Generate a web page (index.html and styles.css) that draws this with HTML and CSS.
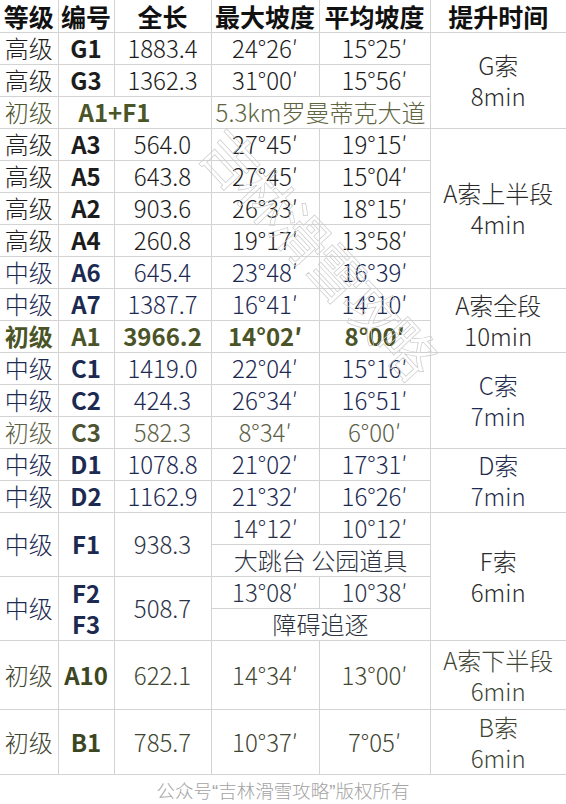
FILE: index.html
```html
<!DOCTYPE html>
<html lang="zh-CN">
<head>
<meta charset="utf-8">
<title>吉林滑雪 雪道数据</title>
<link rel="stylesheet" href="styles.css">
</head>
<body>
<div class="page">
  <table class="slopes">
    <colgroup>
      <col class="c1"><col class="c2"><col class="c3"><col class="c4"><col class="c5"><col class="c6">
    </colgroup>
    <thead>
      <tr class="r">
        <th>等级</th><th>编号</th><th>全长</th><th>最大坡度</th><th>平均坡度</th><th>提升时间</th>
      </tr>
    </thead>
    <tbody>
      <tr class="r hi">
        <td>高级</td><td class="code">G1</td><td>1883.4</td><td>24°26′</td><td>15°25′</td>
        <td rowspan="3" class="lift t-dark">G索<br>8min</td>
      </tr>
      <tr class="r hi">
        <td>高级</td><td class="code">G3</td><td>1362.3</td><td>31°00′</td><td>15°56′</td>
      </tr>
      <tr class="r low">
        <td>初级</td><td colspan="2" class="code combo">A1+F1</td><td colspan="2" class="note">5.3km罗曼蒂克大道</td>
      </tr>
      <tr class="r hi">
        <td>高级</td><td class="code">A3</td><td>564.0</td><td>27°45′</td><td>19°15′</td>
        <td rowspan="5" class="lift t-dark">A索上半段<br>4min</td>
      </tr>
      <tr class="r hi">
        <td>高级</td><td class="code">A5</td><td>643.8</td><td>27°45′</td><td>15°04′</td>
      </tr>
      <tr class="r hi">
        <td>高级</td><td class="code">A2</td><td>903.6</td><td>26°33′</td><td>18°15′</td>
      </tr>
      <tr class="r hi">
        <td>高级</td><td class="code">A4</td><td>260.8</td><td>19°17′</td><td>13°58′</td>
      </tr>
      <tr class="r mid">
        <td>中级</td><td class="code">A6</td><td>645.4</td><td>23°48′</td><td>16°39′</td>
      </tr>
      <tr class="r mid">
        <td>中级</td><td class="code">A7</td><td>1387.7</td><td>16°41′</td><td>14°10′</td>
        <td rowspan="2" class="lift t-dark">A索全段<br>10min</td>
      </tr>
      <tr class="r low strong">
        <td>初级</td><td class="code">A1</td><td>3966.2</td><td>14°02′</td><td>8°00′</td>
      </tr>
      <tr class="r mid">
        <td>中级</td><td class="code">C1</td><td>1419.0</td><td>22°04′</td><td>15°16′</td>
        <td rowspan="3" class="lift t-mid">C索<br>7min</td>
      </tr>
      <tr class="r mid">
        <td>中级</td><td class="code">C2</td><td>424.3</td><td>26°34′</td><td>16°51′</td>
      </tr>
      <tr class="r low pale">
        <td>初级</td><td class="code">C3</td><td>582.3</td><td>8°34′</td><td>6°00′</td>
      </tr>
      <tr class="r mid">
        <td>中级</td><td class="code">D1</td><td>1078.8</td><td>21°02′</td><td>17°31′</td>
        <td rowspan="2" class="lift t-mid">D索<br>7min</td>
      </tr>
      <tr class="r mid">
        <td>中级</td><td class="code">D2</td><td>1162.9</td><td>21°32′</td><td>16°26′</td>
      </tr>
      <tr class="r mid">
        <td rowspan="2">中级</td><td rowspan="2" class="code">F1</td><td rowspan="2" class="grey">938.3</td><td class="grey">14°12′</td><td class="grey">10°12′</td>
        <td rowspan="4" class="lift t-dark">F索<br>6min</td>
      </tr>
      <tr class="r">
        <td colspan="2" class="note2">大跳台 公园道具</td>
      </tr>
      <tr class="r mid">
        <td rowspan="2">中级</td><td rowspan="2" class="code stack">F2<br>F3</td><td rowspan="2" class="grey">508.7</td><td class="grey">13°08′</td><td class="grey">10°38′</td>
      </tr>
      <tr class="r">
        <td colspan="2" class="note3">障碍追逐</td>
      </tr>
      <tr class="tall low dim">
        <td>初级</td><td class="code">A10</td><td>622.1</td><td>14°34′</td><td>13°00′</td>
        <td class="lift t-olive">A索下半段<br>6min</td>
      </tr>
      <tr class="tall2 low dim">
        <td>初级</td><td class="code">B1</td><td>785.7</td><td>10°37′</td><td>7°05′</td>
        <td class="lift t-olive">B索<br>6min</td>
      </tr>
    </tbody>
  </table>
  <p class="footer">公众号<span class="q">“</span>吉林滑雪攻略<span class="q">”</span>版权所有</p>
  <div class="watermark" aria-hidden="true">吉林滑雪攻略</div>
</div>
</body>
</html>
```
FILE: styles.css
```css
html, body {
  margin: 0;
  padding: 0;
  background: #ffffff;
}

.page {
  position: relative;
  width: 566px;
  height: 804px;
  overflow: hidden;
  font-family: "Noto Sans CJK SC", "Noto Sans", sans-serif;
}

.slopes {
  width: 566px;
  table-layout: fixed;
  border-collapse: collapse;
  font-size: 24px;
  color: #1e1e1e;
}

.c1 { width: 58px; }
.c2 { width: 56px; }
.c3 { width: 97px; }
.c4 { width: 108px; }
.c5 { width: 111px; }
.c6 { width: 136px; }

.slopes th,
.slopes td {
  padding: 0;
  border: 1px solid #d3d3d3;
  text-align: center;
  vertical-align: middle;
  white-space: nowrap;
  line-height: 26px;
  font-weight: 300;
}

.slopes tr > :first-child { border-left: none; }
.slopes tr > :last-child { border-right: none; }
.slopes thead th { border-top: none; font-weight: 700; color: #111; font-size: 25px; }
.slopes td.lift { border-right: none; }

.r { height: 32px; }
.tall { height: 69px; }
.tall2 { height: 65px; }

.slopes td.code { font-weight: 700; }

.hi td { color: #1c1c1c; }
.mid td { color: #1c2a52; }
.low td { color: #4c5530; }
.slopes .strong td { font-weight: 700; color: #4a5426; }
.pale td { color: #5d6147; }
.pale td.code { color: #4e5432; }
.dim td { color: #3f4632; }
.dim td.code { color: #3c4622; }

.mid td.grey { color: #2c3347; }

.slopes td.combo {
  text-align: left;
  padding-left: 20px;
  color: #4a5528;
}

.slopes td.note {
  color: #5e6440;
}

.note2, .note3 { color: #2d3240; }

.slopes td.stack { line-height: 31px; }

.slopes td.lift {
  line-height: 31px;
}
.slopes td.t-dark { color: #2b2b2b; font-weight: 300; }
.slopes td.t-mid { color: #1f2b4d; }
.slopes td.t-olive { color: #3e4534; }

.footer {
  margin: 0;
  height: 30px;
  line-height: 30px;
  text-align: center;
  font-size: 18.5px;
  color: #a3a3a3;
  font-weight: 300;
}

.q {
  font-family: "Liberation Sans", sans-serif;
}

.watermark {
  position: absolute;
  left: 140px;
  top: 210px;
  width: 360px;
  text-align: center;
  font-size: 56px;
  letter-spacing: -4px;
  color: transparent;
  -webkit-text-stroke: 0.7px #cbcbcb;
  transform: rotate(47deg);
  transform-origin: center center;
  pointer-events: none;
}
```
